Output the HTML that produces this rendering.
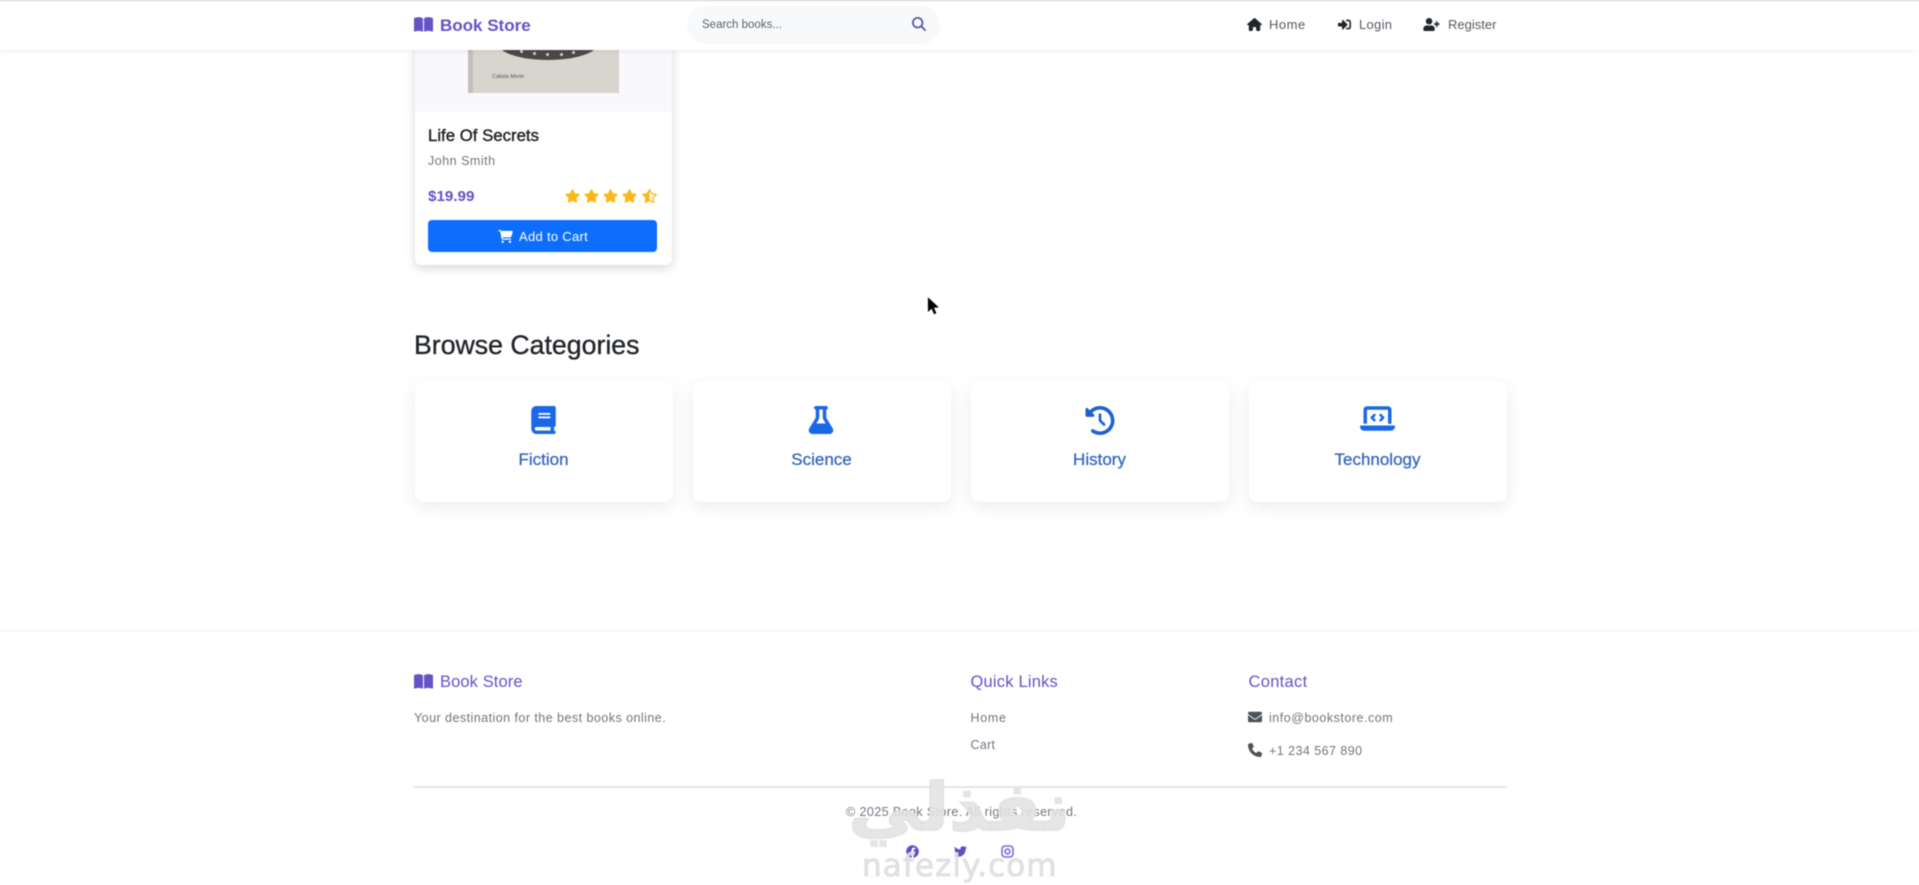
<!DOCTYPE html>
<html lang="en">
<head>
<meta charset="utf-8">
<title>Book Store</title>
<style>
html,body{margin:0;padding:0;width:1919px;height:885px;overflow:hidden;background:#fff}
#p{position:relative;width:1919px;height:885px;overflow:hidden;background:#fff;font-family:"Liberation Sans",sans-serif;filter:blur(.5px)}
.t{position:absolute;white-space:nowrap;line-height:20px;height:20px}
.b{position:absolute}
svg{position:absolute;display:block;fill:currentColor}
.cat{position:absolute;top:381px;width:258px;height:121px;background:#fff;border-radius:9px;box-shadow:0 5px 18px rgba(0,0,0,.08)}
.cl{position:absolute;top:449.5px;width:258px;text-align:center;font-size:17px;line-height:20px;color:#2f65bd;-webkit-text-stroke:.25px #2f65bd}
.g{color:#6f7780;font-size:12.5px}
.pu{color:#6453c4}
.d{position:absolute;width:3px;height:3px;border-radius:50%;background:#cfcfcf}
</style>
</head>
<body>
<div id="p">

<!-- product card -->
<div class="b" style="left:415px;top:-20px;width:257px;height:285px;background:#fff;border-radius:6px;box-shadow:0 3px 10px rgba(0,0,0,.16)"></div>
<div class="b" style="left:415px;top:40px;width:257px;height:72px;background:#f9f9fb"></div>
<div class="b" style="left:468px;top:40px;width:151px;height:53px;background:#d8d5cf"></div>
<div class="b" style="left:468px;top:40px;width:5px;height:53px;background:#c2bfba"></div>
<div class="b" style="left:498px;top:27px;width:100px;height:33px;border-radius:50%;background:#4a4947"></div>
<div class="d" style="left:520px;top:50px"></div><div class="d" style="left:533px;top:52px"></div><div class="d" style="left:546px;top:53px"></div><div class="d" style="left:560px;top:53px"></div><div class="d" style="left:572px;top:51px"></div>
<div class="t" style="left:492px;top:67px;font-size:5.5px;color:#555">Calista Merle</div>

<div class="t" style="left:428px;top:125.5px;font-size:16.8px;color:#1f2327;-webkit-text-stroke:.4px #1f2327">Life Of Secrets</div>
<div class="t" style="left:428px;top:151px;font-size:12.5px;letter-spacing:.5px;color:#6f7780">John Smith</div>
<div class="t pu" style="left:428px;top:187px;font-size:15.2px;font-weight:bold">$19.99</div>

<svg style="left:565px;top:189px;width:15px;height:14px;color:#fbb917" viewBox="0 0 576 512"><path d="M259.3 17.8L194 150.2 47.9 171.5c-26.2 3.8-36.7 36.1-17.7 54.6l105.7 103-25 145.5c-4.5 26.3 23.2 46 46.4 33.7L288 439.6l130.7 68.7c23.2 12.2 50.9-7.4 46.4-33.7l-25-145.5 105.7-103c19-18.5 8.5-50.8-17.7-54.6L382 150.2 316.7 17.8c-11.7-23.6-45.6-23.9-57.4 0z"/></svg>
<svg style="left:584px;top:189px;width:15px;height:14px;color:#fbb917" viewBox="0 0 576 512"><path d="M259.3 17.8L194 150.2 47.9 171.5c-26.2 3.8-36.7 36.1-17.7 54.6l105.7 103-25 145.5c-4.5 26.3 23.2 46 46.4 33.7L288 439.6l130.7 68.7c23.2 12.2 50.9-7.4 46.4-33.7l-25-145.5 105.7-103c19-18.5 8.5-50.8-17.7-54.6L382 150.2 316.7 17.8c-11.7-23.6-45.6-23.9-57.4 0z"/></svg>
<svg style="left:603px;top:189px;width:15px;height:14px;color:#fbb917" viewBox="0 0 576 512"><path d="M259.3 17.8L194 150.2 47.9 171.5c-26.2 3.8-36.7 36.1-17.7 54.6l105.7 103-25 145.5c-4.5 26.3 23.2 46 46.4 33.7L288 439.6l130.7 68.7c23.2 12.2 50.9-7.4 46.4-33.7l-25-145.5 105.7-103c19-18.5 8.5-50.8-17.7-54.6L382 150.2 316.7 17.8c-11.7-23.6-45.6-23.9-57.4 0z"/></svg>
<svg style="left:622px;top:189px;width:15px;height:14px;color:#fbb917" viewBox="0 0 576 512"><path d="M259.3 17.8L194 150.2 47.9 171.5c-26.2 3.8-36.7 36.1-17.7 54.6l105.7 103-25 145.5c-4.5 26.3 23.2 46 46.4 33.7L288 439.6l130.7 68.7c23.2 12.2 50.9-7.4 46.4-33.7l-25-145.5 105.7-103c19-18.5 8.5-50.8-17.7-54.6L382 150.2 316.7 17.8c-11.7-23.6-45.6-23.9-57.4 0z"/></svg>
<svg style="left:642px;top:189px;width:15px;height:14px;color:#fbb917" viewBox="0 0 536 512"><path d="M508.55 171.51L362.18 150.2 296.77 17.81C290.89 5.98 279.42 0 267.95 0c-11.4 0-22.79 5.9-28.69 17.81l-65.43 132.38-146.38 21.29c-26.25 3.8-36.77 36.09-17.74 54.59l105.89 103-25.06 145.48C86.98 495.33 103.57 512 122.15 512c4.93 0 10-1.17 14.87-3.75l130.95-68.68 130.94 68.7c4.86 2.55 9.92 3.71 14.83 3.71 18.6 0 35.22-16.61 31.66-37.4l-25.03-145.49 105.91-102.98c19.04-18.5 8.52-50.8-17.73-54.6zm-121.74 123.2l-18.12 17.62 4.28 24.88 19.52 113.45-102.13-53.59-22.38-11.74.03-317.19 51.03 103.29 11.18 22.63 25.01 3.64 114.23 16.63-82.65 80.38z"/></svg>

<div class="b" style="left:428px;top:220px;width:229px;height:32px;background:#0d6efd;border-radius:4px"></div>
<svg style="left:498px;top:230px;width:15px;height:13px;color:#fff" viewBox="0 0 576 512"><path d="M0 24C0 10.7 10.7 0 24 0H69.5c22 0 41.5 12.8 50.6 32h411c26.3 0 45.5 25 38.6 50.4l-41 152.3c-8.5 31.4-37 53.3-69.5 53.3H170.7l5.4 28.5c2.2 11.3 12.1 19.5 23.6 19.5H488c13.3 0 24 10.7 24 24s-10.7 24-24 24H199.7c-34.6 0-64.3-24.6-70.7-58.5L77.4 54.5c-.7-3.8-4-6.5-7.9-6.5H24C10.7 48 0 37.3 0 24zM128 464a48 48 0 1 1 96 0 48 48 0 1 1 -96 0zm336-48a48 48 0 1 1 0 96 48 48 0 1 1 0-96z"/></svg>
<div class="t" style="left:519px;top:227px;font-size:13px;letter-spacing:.3px;color:#fff">Add to Cart</div>

<!-- navbar -->
<div class="b" style="left:0;top:0;width:1919px;height:50px;background:#fff;box-shadow:0 1px 5px rgba(0,0,0,.07)"></div>
<div class="b" style="left:0;top:0;width:1919px;height:1px;background:#cfcfcf"></div>
<svg style="left:414px;top:16px;width:19px;height:17px;color:#6453c4" viewBox="0 0 576 512"><path d="M249.6 471.5c10.8 3.8 22.4-4.1 22.4-15.5V78.6c0-4.2-1.6-8.4-5-11C247.4 52 202.4 32 144 32C93.5 32 46.3 45.3 18.1 56.1C6.8 60.5 0 71.7 0 83.8V454.1c0 11.9 12.8 20.2 24.1 16.5C55.6 460.1 105.5 448 144 448c33.9 0 79 14 105.6 23.5zm76.8 0C353 462 398.1 448 432 448c38.5 0 88.4 12.1 119.9 22.6c11.3 3.8 24.1-4.6 24.1-16.5V83.8c0-12.1-6.8-23.3-18.1-27.6C529.7 45.3 482.5 32 432 32c-58.4 0-103.4 20-123 35.6c-3.4 2.6-5 6.8-5 11V456c0 11.4 11.7 19.3 22.4 15.5z"/></svg>
<div class="t pu" style="left:440px;top:15.5px;font-size:17px;font-weight:bold">Book Store</div>
<div class="b" style="left:687px;top:6px;width:253px;height:38px;background:#f8f9fa;border-radius:19px"></div>
<div class="t" style="left:702px;top:15px;font-size:11.5px;color:#5c6269">Search books...</div>
<svg style="left:912px;top:17px;width:14px;height:14px;color:#5a55a8" viewBox="0 0 512 512"><path d="M416 208c0 45.9-14.9 88.3-40 122.7L502.6 457.4c12.5 12.5 12.5 32.8 0 45.3s-32.8 12.5-45.3 0L330.7 376c-34.4 25.2-76.8 40-122.7 40C93.1 416 0 322.9 0 208S93.1 0 208 0S416 93.1 416 208zM208 352a144 144 0 1 0 0-288 144 144 0 1 0 0 288z"/></svg>

<svg style="left:1247px;top:18px;width:15px;height:13px;color:#212529" viewBox="0 0 576 512"><path d="M575.8 255.5c0 18-15 32.1-32 32.1h-32l.7 160.2c0 2.7-.2 5.4-.5 8.1V472c0 22.1-17.9 40-40 40H456c-1.1 0-2.2 0-3.3-.1c-1.4 .1-2.8 .1-4.2 .1H416 392c-22.1 0-40-17.9-40-40V448 384c0-17.7-14.3-32-32-32H256c-17.7 0-32 14.3-32 32v64 24c0 22.1-17.9 40-40 40H160 128.1c-1.5 0-3-.1-4.5-.2c-1.2 .1-2.4 .2-3.6 .2H104c-22.1 0-40-17.9-40-40V360c0-.9 0-1.9 .1-2.8V287.6H32c-18 0-32-14-32-32.1c0-9 3-17 10-24L266.4 8c7-7 15-8 22-8s15 2 21 7L564.8 231.5c8 7 12 15 11 24z"/></svg>
<div class="t" style="left:1269px;top:15px;font-size:13px;letter-spacing:.5px;color:#555b61">Home</div>
<svg style="left:1338px;top:18px;width:13px;height:13px;color:#212529" viewBox="0 0 512 512"><path d="M416 448h-84c-6.6 0-12-5.4-12-12v-40c0-6.6 5.4-12 12-12h84c17.7 0 32-14.3 32-32V160c0-17.7-14.3-32-32-32h-84c-6.6 0-12-5.4-12-12V76c0-6.6 5.4-12 12-12h84c53 0 96 43 96 96v192c0 53-43 96-96 96zm-47-201L201 79c-15-15-41-4.5-41 17v96H24c-13.3 0-24 10.7-24 24v96c0 13.3 10.7 24 24 24h136v96c0 21.5 26 32 41 17l168-168c9.3-9.4 9.3-24.6 0-34z"/></svg>
<div class="t" style="left:1359px;top:15px;font-size:13px;letter-spacing:.3px;color:#555b61">Login</div>
<svg style="left:1423px;top:18px;width:17px;height:13px;color:#212529" viewBox="0 0 640 512"><path d="M624 208h-64v-64c0-8.8-7.2-16-16-16h-32c-8.8 0-16 7.2-16 16v64h-64c-8.8 0-16 7.2-16 16v32c0 8.8 7.2 16 16 16h64v64c0 8.8 7.2 16 16 16h32c8.8 0 16-7.2 16-16v-64h64c8.8 0 16-7.2 16-16v-32c0-8.8-7.2-16-16-16zm-400 48c70.7 0 128-57.3 128-128S294.7 0 224 0 96 57.3 96 128s57.3 128 128 128zm89.6 32h-16.7c-22.2 10.2-46.9 16-72.9 16s-50.6-5.8-72.9-16h-16.7C60.2 288 0 348.2 0 422.4V464c0 26.5 21.5 48 48 48h352c26.5 0 48-21.5 48-48v-41.6c0-74.2-60.2-134.4-134.4-134.4z"/></svg>
<div class="t" style="left:1448px;top:15px;font-size:13px;color:#555b61">Register</div>

<!-- cursor -->
<svg style="left:927px;top:297px;width:12px;height:19px;color:#000" viewBox="0 0 13 20"><path d="M1 0v16l4-3.6 2.6 6 2.6-1.1-2.6-5.9 5.2-.4z"/></svg>

<!-- categories -->
<div class="t" style="left:414px;top:335px;font-size:26.7px;color:#212529;-webkit-text-stroke:.35px #212529">Browse Categories</div>

<div class="cat" style="left:414.5px"></div>
<div class="cat" style="left:692.5px"></div>
<div class="cat" style="left:970.5px"></div>
<div class="cat" style="left:1248.5px"></div>

<svg style="left:531px;top:406px;width:25px;height:28px;color:#1a68e8" viewBox="0 0 448 512"><path d="M96 0C43 0 0 43 0 96V416c0 53 43 96 96 96H384h32c17.7 0 32-14.3 32-32s-14.3-32-32-32V384c17.7 0 32-14.3 32-32V32c0-17.7-14.3-32-32-32H384 96zm0 384H352v64H96c-17.7 0-32-14.3-32-32s14.3-32 32-32zm32-240c0-8.8 7.2-16 16-16H336c8.8 0 16 7.2 16 16s-7.2 16-16 16H144c-8.8 0-16-7.2-16-16zm16 48H336c8.8 0 16 7.2 16 16s-7.2 16-16 16H144c-8.8 0-16-7.2-16-16s7.2-16 16-16z"/></svg>
<svg style="left:808px;top:406px;width:26px;height:28px;color:#1a68e8" viewBox="0 0 448 512"><path d="M288 0H160 128C110.3 0 96 14.3 96 32s14.3 32 32 32V196.8c0 11.8-3.3 23.5-9.5 33.5L10.3 406.2C3.6 417.2 0 429.7 0 442.6C0 480.9 31.1 512 69.4 512H378.6c38.3 0 69.4-31.1 69.4-69.4c0-12.8-3.6-25.4-10.3-36.4L329.5 230.4c-6.2-10.1-9.5-21.7-9.5-33.5V64c17.7 0 32-14.3 32-32s-14.3-32-32-32H288zM192 196.8V64h64V196.8c0 23.7 6.6 46.9 19 67.1L309.5 320h-171L173 263.9c12.4-20.2 19-43.4 19-67.1z"/></svg>
<svg style="left:1085px;top:406px;width:30px;height:29px;color:#1f62cf" viewBox="0 0 512 512"><path d="M75 75L41 41C25.9 25.9 0 36.6 0 57.9V168c0 13.3 10.7 24 24 24H134.1c21.4 0 32.1-25.9 17-41l-30.8-30.8C155 85.5 203 64 256 64c106 0 192 86 192 192s-86 192-192 192c-40.8 0-78.6-12.7-109.7-34.4c-14.5-10.1-34.4-6.6-44.6 7.9s-6.6 34.4 7.9 44.6C151.2 495 201.7 512 256 512c141.4 0 256-114.6 256-256S397.4 0 256 0C185.3 0 121.3 28.7 75 75zm181 53c-13.3 0-24 10.7-24 24V256c0 6.4 2.5 12.5 7 17l72 72c9.4 9.4 24.6 9.4 33.9 0s9.4-24.6 0-33.9l-65-65V152c0-13.3-10.7-24-24-24z"/></svg>
<svg style="left:1360px;top:403px;width:35px;height:31px;color:#1a68e8" viewBox="0 0 640 512"><path d="M64 96c0-35.3 28.7-64 64-64H512c35.3 0 64 28.7 64 64V352H512V96H128V352H64V96zM0 403.2C0 392.6 8.6 384 19.2 384H620.8c10.6 0 19.2 8.6 19.2 19.2c0 42.4-34.4 76.8-76.8 76.8H76.8C34.4 480 0 445.6 0 403.2zM281 209l-31 31 31 31c9.4 9.4 9.4 24.6 0 33.9s-24.6 9.4-33.9 0l-48-48c-9.4-9.4-9.4-24.6 0-33.9l48-48c9.4-9.4 24.6-9.4 33.9 0s9.4 24.6 0 33.9zM393 175l48 48c9.4 9.4 9.4 24.6 0 33.9l-48 48c-9.4 9.4-24.6 9.4-33.9 0s-9.4-24.6 0-33.9l31-31-31-31c-9.4-9.4-9.4-24.6 0-33.9s24.6-9.4 33.9 0z"/></svg>

<div class="cl" style="left:414.5px">Fiction</div>
<div class="cl" style="left:692.5px">Science</div>
<div class="cl" style="left:970.5px">History</div>
<div class="cl" style="left:1248.5px">Technology</div>

<!-- footer -->
<div class="b" style="left:0;top:628px;width:1919px;height:5px;background:linear-gradient(#fff,#f8f8f8 50%,#fff)"></div>
<svg style="left:414px;top:673px;width:19px;height:17px;color:#6453c4" viewBox="0 0 576 512"><path d="M249.6 471.5c10.8 3.8 22.4-4.1 22.4-15.5V78.6c0-4.2-1.6-8.4-5-11C247.4 52 202.4 32 144 32C93.5 32 46.3 45.3 18.1 56.1C6.8 60.5 0 71.7 0 83.8V454.1c0 11.9 12.8 20.2 24.1 16.5C55.6 460.1 105.5 448 144 448c33.9 0 79 14 105.6 23.5zm76.8 0C353 462 398.1 448 432 448c38.5 0 88.4 12.1 119.9 22.6c11.3 3.8 24.1-4.6 24.1-16.5V83.8c0-12.1-6.8-23.3-18.1-27.6C529.7 45.3 482.5 32 432 32c-58.4 0-103.4 20-123 35.6c-3.4 2.6-5 6.8-5 11V456c0 11.4 11.7 19.3 22.4 15.5z"/></svg>
<div class="t pu" style="left:440px;top:672px;font-size:16.5px;letter-spacing:.1px">Book Store</div>
<div class="t g" style="left:414px;top:708px;font-size:12.6px;letter-spacing:.42px">Your destination for the best books online.</div>

<div class="t pu" style="left:970.5px;top:672px;font-size:16.5px;letter-spacing:.2px">Quick Links</div>
<div class="t g" style="left:970.5px;top:708px;letter-spacing:.7px">Home</div>
<div class="t g" style="left:970.5px;top:735px;letter-spacing:.3px">Cart</div>

<div class="t pu" style="left:1248.5px;top:672px;font-size:16.5px;letter-spacing:.3px">Contact</div>
<svg style="left:1248px;top:710px;width:14px;height:14px;color:#4d5359" viewBox="0 0 512 512"><path d="M502.3 190.8c3.9-3.1 9.7-.2 9.7 4.7V400c0 26.5-21.5 48-48 48H48c-26.5 0-48-21.5-48-48V195.6c0-5 5.7-7.8 9.7-4.7 22.4 17.4 52.1 39.5 154.1 113.6 21.1 15.4 56.7 47.8 92.2 47.6 35.7.3 72-32.8 92.3-47.6 102-74.1 131.6-96.3 154-113.7zM256 320c23.2.4 56.6-29.2 73.4-41.4 132.7-96.3 142.8-104.7 173.4-128.7 5.8-4.5 9.2-11.5 9.2-18.9v-19c0-26.5-21.5-48-48-48H48C21.5 64 0 85.5 0 112v19c0 7.4 3.4 14.3 9.2 18.9 30.6 23.9 40.7 32.4 173.4 128.7 16.8 12.2 50.2 41.8 73.4 41.4z"/></svg>
<div class="t g" style="left:1269px;top:708px;letter-spacing:.52px">info@bookstore.com</div>
<svg style="left:1248px;top:743px;width:14px;height:14px;color:#4d5359" viewBox="0 0 512 512"><path d="M164.9 24.6c-7.7-18.6-28-28.5-47.4-23.2l-88 24C12.1 30.2 0 46 0 64C0 311.4 200.6 512 448 512c18 0 33.8-12.1 38.6-29.5l24-88c5.3-19.4-4.6-39.7-23.2-47.4l-96-40c-16.3-6.8-35.2-2.1-46.3 11.6L304.7 368C234.3 334.7 177.3 277.7 144 207.3L193.3 167c13.7-11.2 18.4-30 11.6-46.3l-40-96z"/></svg>
<div class="t g" style="left:1269px;top:741px;letter-spacing:.45px">+1 234 567 890</div>

<div class="b" style="left:414px;top:786px;width:1093px;height:2px;background:#e6e6e6"></div>
<div class="t g" style="left:846px;top:802px;font-size:12.6px;letter-spacing:.36px">© 2025 Book Store. All rights reserved.</div>

<!-- social -->
<svg style="left:906px;top:845px;width:13px;height:13px;color:#5b4fc4" viewBox="0 0 512 512"><path d="M504 256C504 119 393 8 256 8S8 119 8 256c0 123.78 90.69 226.38 209.25 245V327.69h-63V256h63v-54.64c0-62.15 37-96.48 93.67-96.48 27.14 0 55.52 4.84 55.52 4.84v61h-31.28c-30.8 0-40.41 19.12-40.41 38.73V256h68.78l-11 71.69h-57.78V501C413.31 482.38 504 379.78 504 256z"/></svg>
<svg style="left:954px;top:845px;width:13px;height:13px;color:#5b4fc4" viewBox="0 0 512 512"><path d="M459.37 151.716c.325 4.548.325 9.097.325 13.645 0 138.72-105.583 298.558-298.558 298.558-59.452 0-114.68-17.219-161.137-47.106 8.447.974 16.568 1.299 25.34 1.299 49.055 0 94.213-16.568 130.274-44.832-46.132-.975-84.792-31.188-98.112-72.772 6.498.974 12.995 1.624 19.818 1.624 9.421 0 18.843-1.3 27.614-3.573-48.081-9.747-84.143-51.98-84.143-102.985v-1.299c13.969 7.797 30.214 12.67 47.431 13.319-28.264-18.843-46.781-51.005-46.781-87.391 0-19.492 5.197-37.36 14.294-52.954 51.655 63.675 129.3 105.258 216.365 109.807-1.624-7.797-2.599-15.918-2.599-24.04 0-57.828 46.782-104.934 104.934-104.934 30.213 0 57.502 12.67 76.67 33.137 23.715-4.548 46.456-13.32 66.599-25.34-7.798 24.366-24.366 44.833-46.132 57.827 21.117-2.273 41.584-8.122 60.426-16.243-14.292 20.791-32.161 39.308-52.628 54.253z"/></svg>
<svg style="left:1001px;top:845px;width:13px;height:13px;fill:none;stroke:#7a6cd6;stroke-width:1.6" viewBox="0 0 13 13"><rect x="1" y="1" width="11" height="11" rx="3"/><circle cx="6.5" cy="6.5" r="2.4"/></svg>

<!-- watermark -->
<div class="t" dir="rtl" style="left:847px;top:768px;width:225px;height:80px;line-height:80px;font-family:'DejaVu Sans',sans-serif;font-weight:bold;font-size:66px;color:rgba(226,226,226,.88);-webkit-text-stroke:2px rgba(226,226,226,.88);text-align:center;transform:scaleX(1.1)">نفذلي</div>
<div class="t" style="left:862px;top:847px;height:38px;line-height:38px;font-family:'DejaVu Sans',sans-serif;font-size:31px;letter-spacing:1.1px;color:rgba(222,222,222,.9);-webkit-text-stroke:.8px rgba(222,222,222,.9)">nafezly.com</div>

</div>
</body>
</html>
